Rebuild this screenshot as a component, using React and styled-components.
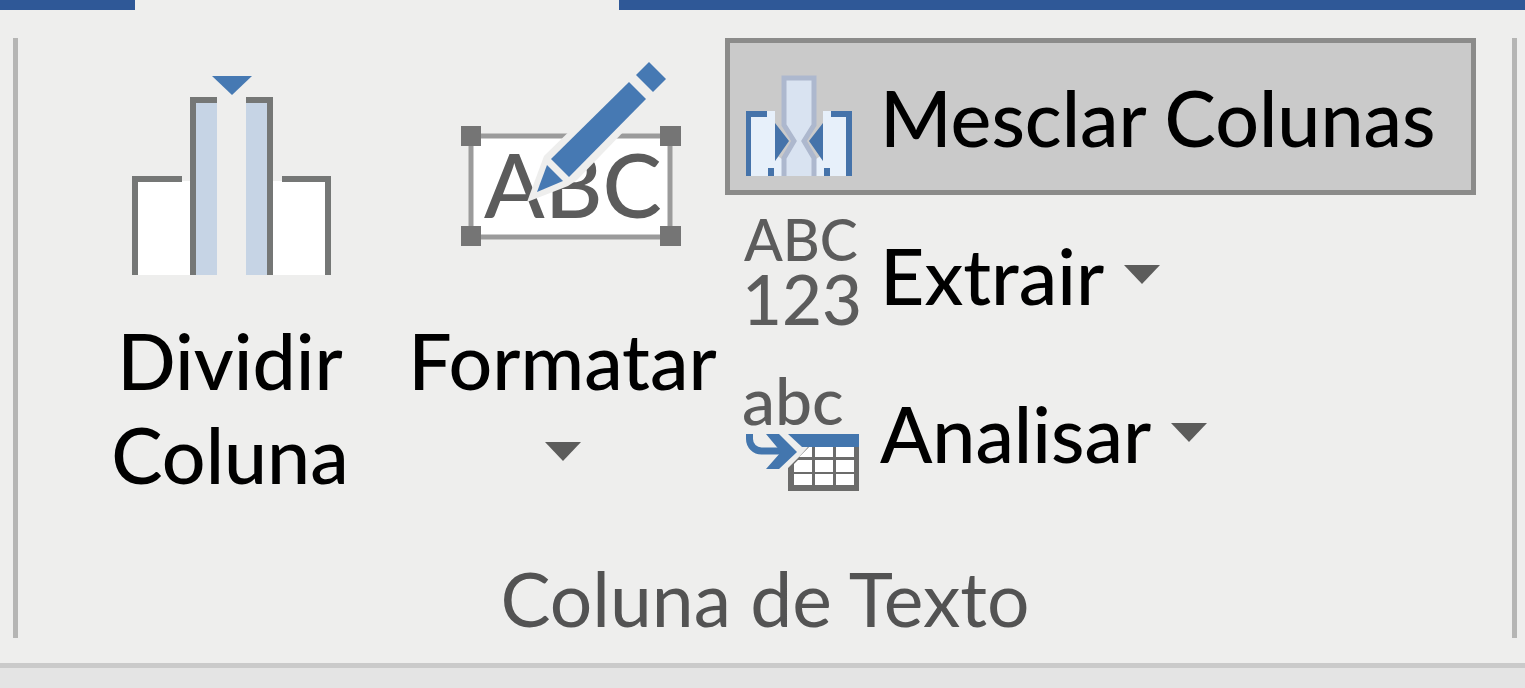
import React from 'react';
import styled, { createGlobalStyle } from 'styled-components';

// --- Styled Components ---
const GlobalStyle = createGlobalStyle`
  * {
    box-sizing: border-box;
  }
  body {
    margin: 0;
    background: #e4e4e4;
    font-family: Lato, 'Open Sans', sans-serif;
  }
`;

const TabStrip = styled.div`
  height: 10px;
  padding-left: 135px;
  background: #2f5897;
`;

const ActiveTab = styled.div`
  width: 484px;
  height: 100%;
  background: #eeeeed;
`;

const Ribbon = styled.main`
  padding: 28px 8px 25px 13px;
  background: #eeeeed;
  border-bottom: 5px solid #cacaca;
`;

const Group = styled.section`
  border-left: 5px solid #b5b5b4;
  border-right: 5px solid #b5b5b4;
`;

const Commands = styled.div`
  display: flex;
  align-items: flex-start;
  padding: 0 36px 0 80px;
`;

const LargeButton = styled.button`
  display: flex;
  flex-direction: column;
  align-items: center;
  gap: 35px;
  flex: none;
  width: ${({ $wide }) => ($wide ? '325px' : '264px')};
  margin-right: ${({ $wide }) => ($wide ? '0' : '38px')};
  padding: 20px 0 0;
  border: none;
  background: transparent;
  color: #000;
  font: inherit;
  font-size: 77px;
  font-weight: 500;
  line-height: 94px;
  white-space: nowrap;
  cursor: pointer;
`;

const SmallList = styled.div`
  display: flex;
  flex-direction: column;
  align-items: flex-start;
  gap: 1px;
  flex: 1;
`;

const SmallButton = styled.button`
  display: flex;
  align-items: center;
  width: ${({ $active }) => ($active ? '100%' : 'auto')};
  height: 157px;
  padding: 0 15px;
  border: 5px solid ${({ $active }) => ($active ? '#8b8b8a' : 'transparent')};
  background: ${({ $active }) => ($active ? '#cacaca' : 'transparent')};
  color: #000;
  font: inherit;
  font-size: 77px;
  font-weight: 500;
  line-height: 94px;
  white-space: nowrap;
  cursor: pointer;
`;

const SmallLabel = styled.span`
  margin: 0 20px;
`;

const GroupTitle = styled.h2`
  margin: 0;
  padding: 47px 0 0;
  color: #535353;
  font-size: 75px;
  font-weight: 400;
  line-height: 80px;
  text-align: center;
`;

const Drawing = styled.svg`
  display: block;
  flex: none;
  overflow: visible;
`;

const GlyphText = styled.text`
  font-family: Lato, sans-serif;
  font-size: ${({ $size }) => $size}px;
  font-weight: 500;
  fill: #5c5c5c;
`;

// --- Icons ---
const DropArrow = () => (
  <Drawing width="36" height="19" viewBox="0 0 36 19" aria-hidden="true">
    <path d="M0 0H36L18 19Z" fill="#5c5c5b" />
  </Drawing>
);

const SplitIcon = () => (
  <Drawing width="202" height="220" viewBox="0 0 202 220" aria-hidden="true">
    <path d="M9 123H61V217H9ZM144 123H196V217H144Z" fill="#fff" />
    <path d="M67 45H88V217H67ZM117 45H138V217H117Z" fill="#c6d4e5" />
    <path
      d="M3 118H53V124H9V217H3ZM61 39H88V45H67V217H61ZM117 39H144V217H138V45H117ZM153 118H202V217H196V124H153Z"
      fill="#757776"
    />
    <path d="M83 18H123L103 37Z" fill="#4679b3" />
  </Drawing>
);

const FormatIcon = () => (
  <Drawing width="239" height="220" viewBox="0 0 239 220" aria-hidden="true">
    <rect x="28" y="78" width="199" height="101" fill="#fff" stroke="#9b9b9b" strokeWidth="5" />
    <path d="M18 68H38V88H18ZM217 68H238V88H217ZM18 168H38V188H18ZM217 168H238V188H217Z" fill="#757575" />
    <GlyphText $size={89} x="41" y="160">ABC</GlyphText>
    <path d="M84 144L101 98L186 15L212 41L134 122L125 128Z" fill="#eeeeed" />
    <g fill="#4679b3">
      <path d="M104 107L120 123L94 134Z" />
      <path d="M186 24L203 41L126 119L108 101Z" />
      <path d="M206 4L223 21L210 34L193 17Z" />
    </g>
  </Drawing>
);

const MergeIcon = () => (
  <Drawing width="115" height="120" viewBox="0 0 115 120" aria-hidden="true">
    <path
      d="M6 60H22V54H30V104L37 95V119H6ZM101 60H86V54H78V104L71 95V119H101Z"
      fill="#e7f0fa"
    />
    <path d="M37 66L49 84L37 102M71 66L59 84L71 102" fill="none" stroke="#cacaca" strokeWidth="10" />
    <path
      d="M39 119V101L49 84L39 68V21H69V68L59 84L69 101V119"
      fill="#d9e3f1"
      stroke="#adb8ce"
      strokeWidth="5"
    />
    <path
      d="M1 54H22V60H6V119H1ZM107 54H86V60H101V119H107ZM23 111H29V119H23ZM79 111H85V119H79ZM30 66L44 84L30 104ZM78 66L64 84L78 104Z"
      fill="#4573aa"
    />
  </Drawing>
);

const ExtractIcon = () => (
  <Drawing width="115" height="120" viewBox="0 0 115 120" aria-hidden="true">
    <GlyphText $size={57} x="-1" y="46">ABC</GlyphText>
    <GlyphText $size={69} x="-3" y="110">123</GlyphText>
  </Drawing>
);

const ParseIcon = () => (
  <Drawing width="115" height="120" viewBox="0 0 115 120" aria-hidden="true">
    <GlyphText $size={66} x="-3" y="52">abc</GlyphText>
    <path d="M43 95L54 84L63 74H114V118H43Z" fill="#6c6c6b" />
    <path
      d="M67 74V84H54L64 74ZM70 74H88V84H70ZM91 74H109V84H91ZM49 99V91L53 87H67V99ZM70 87H88V99H70ZM91 87H109V99H91ZM49 101H67V112H49ZM70 101H88V112H70ZM91 101H109V112H91Z"
      fill="#fff"
    />
    <path d="M43 61H114V74H57Z" fill="#4376ae" />
    <path d="M4.500 61V66A12 12 0 0 0 16.500 78H42" fill="none" stroke="#4376ae" strokeWidth="7" />
    <path d="M21 61H34L52 79L34 96H21L36 79Z" fill="#4376ae" />
  </Drawing>
);

const smallCommands = [
  { id: 'merge', label: 'Mesclar Colunas', Icon: MergeIcon, active: true },
  { id: 'extract', label: 'Extrair', Icon: ExtractIcon, menu: true },
  { id: 'parse', label: 'Analisar', Icon: ParseIcon, menu: true },
];

const App = () => {
  return (
    <>
      <GlobalStyle />
      <TabStrip>
        <ActiveTab />
      </TabStrip>
      <Ribbon>
        <Group>
          <Commands>
            <LargeButton type="button">
              <SplitIcon />
              <span>
                Dividir
                <br />
                Coluna
              </span>
            </LargeButton>
            <LargeButton type="button" $wide>
              <FormatIcon />
              <span>Formatar</span>
              <DropArrow />
            </LargeButton>
            <SmallList>
              {smallCommands.map(({ id, label, Icon, active, menu }) => (
                <SmallButton key={id} type="button" $active={active}>
                  <Icon />
                  <SmallLabel>{label}</SmallLabel>
                  {menu && <DropArrow />}
                </SmallButton>
              ))}
            </SmallList>
          </Commands>
          <GroupTitle>Coluna de Texto</GroupTitle>
        </Group>
      </Ribbon>
    </>
  );
};

export default App;
